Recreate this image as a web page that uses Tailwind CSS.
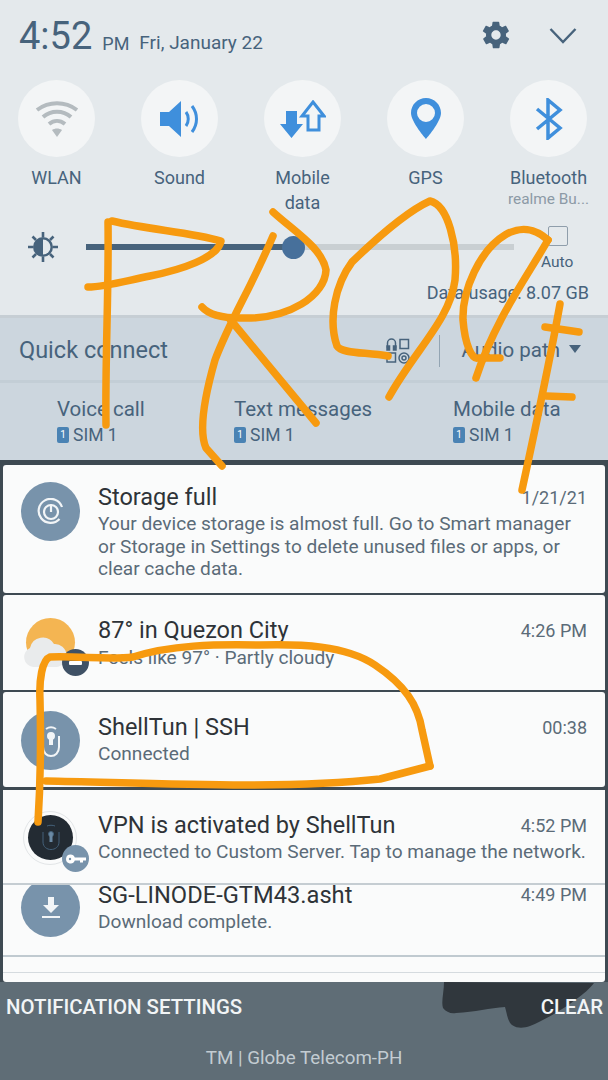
<!DOCTYPE html>
<html lang="en">
<head>
<meta charset="UTF-8">
<meta name="viewport" content="width=device-width, initial-scale=1.0">
<title>Notification panel</title>
<script src="https://cdn.jsdelivr.net/npm/@tailwindcss/browser@4"></script>
</head>
<body class="bg-[#5f6d76]">
<div class="relative w-[608px] h-[1080px] overflow-hidden font-['Roboto',sans-serif] bg-[#5f6d76]">

  <!-- top panel -->
  <div class="h-[315px] bg-[#e4e9ec] text-[#47637c] relative">
    <div class="flex items-center h-[80px] pl-[19px] pr-[31px]">
      <span class="text-[38px] leading-none mt-[-8px]">4:52</span>
      <span class="text-[18px] ml-[10px] mt-[7px]">PM</span>
      <span class="text-[19px] ml-[10px] mt-[7px]">Fri, January 22</span>
      <svg class="ml-auto mt-[-10px]" width="32" height="32" viewBox="0 0 24 24" fill="#47637c"><path d="M19.400 13c.1-.3.1-.7.1-1s0-.7-.1-1l2.100-1.600c.2-.2.2-.4.1-.6l-2-3.500c-.1-.2-.4-.3-.6-.2l-2.500 1c-.5-.4-1.100-.7-1.700-1l-.4-2.600c0-.3-.2-.5-.5-.5h-4c-.3 0-.5.2-.5.4l-.4 2.700c-.6.2-1.100.6-1.700 1l-2.500-1c-.2-.1-.5 0-.6.2l-2 3.500c-.1.2-.1.4.1.6L4.600 11c-.1.3-.1.7-.1 1s0 .7.1 1l-2.100 1.600c-.2.2-.2.4-.1.6l2 3.500c.1.2.4.3.6.2l2.500-1c.5.4 1.100.7 1.700 1l.4 2.600c0 .3.2.5.5.5h4c.3 0 .5-.2.5-.4l.4-2.700c.6-.2 1.100-.6 1.700-1l2.500 1c.2.1.5 0 .6-.2l2-3.500c.1-.2.1-.4-.1-.6L19.400 13zM12 15.500c-1.900 0-3.500-1.600-3.500-3.500s1.600-3.500 3.500-3.500 3.500 1.600 3.500 3.500-1.600 3.500-3.500 3.500z"/></svg>
      <svg class="ml-[37px] mt-[-9px]" width="28" height="18" viewBox="0 0 28 18" fill="none" stroke="#47637c" stroke-width="2.400"><path d="M1.500 2 14 15 26.500 2"/></svg>
    </div>

    <!-- toggles -->
    <div class="flex ml-[-5px]">
      <div class="w-[123px] shrink-0 flex flex-col items-center text-[18px] leading-[25px]">
        <div class="w-[77px] h-[77px] rounded-full bg-[#f3f5f6] flex items-center justify-center">
          <svg width="46" height="38" viewBox="0 0 46 38" fill="none" stroke="#b4bbbf" stroke-width="4"><path d="M3 10C15 1 31 1 43 10"/><path d="M9 17C17 10 29 10 37 17"/><path d="M15 24C20 20 26 20 31 24"/><path d="M18 30 23 37 28 30C25 28 21 28 18 30Z" fill="#b4bbbf" stroke="none"/></svg>
        </div>
        <span class="mt-[8px]">WLAN</span>
      </div>
      <div class="w-[123px] shrink-0 flex flex-col items-center text-[18px] leading-[25px]">
        <div class="w-[77px] h-[77px] rounded-full bg-[#f3f5f6] flex items-center justify-center">
          <svg width="40" height="36" viewBox="0 0 40 36" fill="#3f8fdc"><path d="M0 11H9L21 0V36L9 25H0Z"/><path d="M26 11C29 15 29 21 26 25" fill="none" stroke="#3f8fdc" stroke-width="3"/><path d="M32 5C38 13 38 23 32 31" fill="none" stroke="#3f8fdc" stroke-width="3"/></svg>
        </div>
        <span class="mt-[8px]">Sound</span>
      </div>
      <div class="w-[123px] shrink-0 flex flex-col items-center text-[18px] leading-[25px]">
        <div class="w-[77px] h-[77px] rounded-full bg-[#f3f5f6] flex items-center justify-center">
          <svg width="46" height="38" viewBox="0 0 46 38" fill="#3f8fdc"><path d="M6 11H17V24H23L11.500 38 0 24H6Z"/><path d="M33 2 44 16H39V30H28V16H22Z" fill="#f3f5f6" stroke="#3f8fdc" stroke-width="3"/></svg>
        </div>
        <span class="mt-[8px] text-center">Mobile<br>data</span>
      </div>
      <div class="w-[123px] shrink-0 flex flex-col items-center text-[18px] leading-[25px]">
        <div class="w-[77px] h-[77px] rounded-full bg-[#f3f5f6] flex items-center justify-center">
          <svg width="30" height="41" viewBox="0 0 30 41" fill="#3f8fdc"><path fill-rule="evenodd" d="M15 0C6.700 0 0 6.700 0 15 0 24 15 41 15 41S30 24 30 15C30 6.700 23.300 0 15 0ZM15 6A9 9 0 1 1 15 24 9 9 0 1 1 15 6Z"/></svg>
        </div>
        <span class="mt-[8px]">GPS</span>
      </div>
      <div class="w-[123px] shrink-0 flex flex-col items-center text-[18px] leading-[25px]">
        <div class="w-[77px] h-[77px] rounded-full bg-[#f3f5f6] flex items-center justify-center">
          <svg width="28" height="42" viewBox="0 0 28 42" fill="none" stroke="#3f8fdc" stroke-width="3.500"><path d="M2 11 25 30 13 40V2L25 12 2 31"/></svg>
        </div>
        <span class="mt-[8px]">Bluetooth</span>
        <span class="text-[15.400px] leading-[20px] text-[#8c9aa6] mt-[-1px] whitespace-nowrap">realme Bu...</span>
      </div>
    </div>

    <!-- brightness -->
    <div class="absolute left-[27px] top-[231px]">
      <svg width="32" height="32" viewBox="0 0 32 32" fill="#47637c"><circle cx="16" cy="16" r="10" fill="#47637c"/><path d="M16 8.500A7.500 7.500 0 0 1 16 23.500Z" fill="#e4e9ec"/><g stroke="#47637c" stroke-width="2.600"><path d="M16 1V6M16 26V31M1 16H6M26 16H31M5.500 5.500 9 9M23 23 26.500 26.500M5.500 26.500 9 23M23 9 26.500 5.500"/></g></svg>
    </div>
    <div class="absolute left-[86px] top-[244px] w-[428px] h-[6px] bg-[#c9cfd2]">
      <div class="w-[206px] h-full bg-[#47637c]"></div>
      <div class="absolute left-[196px] top-[-8px] w-[23px] h-[23px] rounded-full bg-[#47709b]"></div>
    </div>
    <div class="absolute left-[548px] top-[226px] w-[20px] h-[20px] border border-[#8f9eab] rounded-[2px]"></div>
    <span class="absolute left-[541px] top-[252px] text-[15.500px] leading-[20px]">Auto</span>
    <span class="absolute right-[19px] top-[281px] text-[18px] leading-[24px]">Data usage: 8.07 GB</span>
  </div>

  <!-- quick connect -->
  <div class="h-[145px] bg-[#ccd6de] border-t-[3px] border-[#c6ced4] text-[#47637c] relative">
    <div class="h-[65px] flex items-center pt-[4px] pl-[19px] pr-[27px] border-b-[3px] border-[#c3ced6]">
      <span class="text-[23.500px]">Quick connect</span>
      <svg class="ml-auto" width="24" height="26" viewBox="0 0 24 26" fill="none" stroke="#47637c" stroke-width="1.500"><path d="M1.500 10V5a4 4 0 0 1 8 0v5"/><rect x="1" y="8" width="2.500" height="4" fill="#47637c"/><rect x="7.500" y="8" width="2.500" height="4" fill="#47637c"/><rect x="14" y="1.500" width="8.500" height="9"/><rect x="1" y="15" width="8.500" height="9"/><circle cx="18" cy="20" r="5"/><circle cx="18" cy="20" r="2"/></svg>
      <div class="w-[1px] h-[32px] bg-[#93a5b3] ml-[29px]"></div>
      <span class="text-[20.500px] ml-[21px] mt-[-2px]">Audio path</span>
      <svg class="ml-[9px] mb-[4px]" width="12" height="8" viewBox="0 0 12 8" fill="#47637c"><path d="M0 0H12L6 8Z"/></svg>
    </div>
    <div class="relative">
      <div class="absolute left-[57px] top-[10px]">
        <div class="text-[20.500px] leading-[32px]">Voice call</div>
        <div class="flex items-center text-[17.500px] leading-[22px] mt-[-1px]"><span class="w-[12px] h-[16px] bg-[#4a83b4] rounded-[2px] text-white text-[10px] leading-[16px] text-center mr-[4px]">1</span>SIM 1</div>
      </div>
      <div class="absolute left-[234px] top-[10px]">
        <div class="text-[20.500px] leading-[32px]">Text messages</div>
        <div class="flex items-center text-[17.500px] leading-[22px] mt-[-1px]"><span class="w-[12px] h-[16px] bg-[#4a83b4] rounded-[2px] text-white text-[10px] leading-[16px] text-center mr-[4px]">1</span>SIM 1</div>
      </div>
      <div class="absolute left-[453px] top-[10px]">
        <div class="text-[20.500px] leading-[32px]">Mobile data</div>
        <div class="flex items-center text-[17.500px] leading-[22px] mt-[-1px]"><span class="w-[12px] h-[16px] bg-[#4a83b4] rounded-[2px] text-white text-[10px] leading-[16px] text-center mr-[4px]">1</span>SIM 1</div>
      </div>
    </div>
  </div>

  <!-- notifications -->
  <div class="h-[522px] bg-[#3e4a52] pt-[5px] px-[3px] relative">
    <div class="h-[128px] bg-[#fafbfb] rounded-[3px] relative">
      <div class="absolute left-[18px] top-[17px] w-[59px] h-[59px] rounded-full bg-[#7893ab] flex items-center justify-center">
        <svg width="28" height="28" viewBox="0 0 28 28" fill="none" stroke="#f2f5f7" stroke-width="2.200"><path d="M22.500 21A12 12 0 1 1 25 9"/><circle cx="14" cy="14" r="7"/><path d="M14 6.500V14"/></svg>
      </div>
      <div class="absolute left-[95px] right-[18px] top-[18px]">
        <div class="flex justify-between items-center">
          <span class="text-[23.500px] leading-[28px] text-[#2e3338]">Storage full</span>
          <span class="text-[18px] text-[#5b6b78]">1/21/21</span>
        </div>
        <p class="text-[19.100px] leading-[22.500px] text-[#5b6b78] mt-[2px]">Your device storage is almost full. Go to Smart manager or Storage in Settings to delete unused files or apps, or clear cache data.</p>
      </div>
    </div>
    <div class="h-[95px] mt-[2px] bg-[#fafbfb] rounded-t-[3px] relative">
      <div class="absolute left-[23px] top-[23px] w-[49px] h-[49px] rounded-full bg-[#f4b552]"></div>
      <svg class="absolute left-[20px] top-[38px]" width="44" height="34" viewBox="0 0 44 34" fill="#e9ebec"><path d="M10 34A10 10 0 0 1 7 15 13 13 0 0 1 31 11 11.500 11.500 0 0 1 33 34Z"/></svg>
      <div class="absolute left-[59px] top-[54px] w-[27px] h-[27px] rounded-full bg-[#3f5165] flex items-center justify-center"><div class="w-[13px] h-[4px] bg-white rounded-[1px]"></div></div>
      <div class="absolute left-[95px] right-[18px] top-[21px]">
        <div class="flex justify-between items-center">
          <span class="text-[23.500px] leading-[28px] text-[#2e3338]">87° in Quezon City</span>
          <span class="text-[18px] text-[#5b6b78]">4:26 PM</span>
        </div>
        <p class="text-[19.100px] leading-[24px] text-[#5b6b78] mt-[2px]">Feels like 97° · Partly cloudy</p>
      </div>
    </div>
    <div class="h-[95px] mt-[2px] bg-[#fafbfb] rounded-[3px] relative">
      <div class="absolute left-[18px] top-[19px] w-[59px] h-[59px] rounded-full bg-[#7893ab] flex items-center justify-center">
        <svg width="28" height="34" viewBox="0 0 28 34" fill="none" stroke="#f2f5f7" stroke-width="2"><path d="M9 5C12 3 16 3 19 5"/><path d="M6 12V23C6 35 22 35 22 23V12"/><circle cx="14" cy="12" r="3" fill="#f2f5f7"/><path d="M14 13V21" stroke-width="4"/></svg>
      </div>
      <div class="absolute left-[95px] right-[18px] top-[21px]">
        <div class="flex justify-between items-center">
          <span class="text-[23.500px] leading-[28px] text-[#2e3338]">ShellTun | SSH</span>
          <span class="text-[18px] text-[#5b6b78]">00:38</span>
        </div>
        <p class="text-[19.100px] leading-[24px] text-[#5b6b78] mt-[1px]">Connected</p>
      </div>
    </div>
    <div class="h-[95px] mt-[3px] bg-[#fafbfb] border-b-2 border-[#c5cdd2] relative z-10">
      <div class="absolute left-[20px] top-[21px] w-[54px] h-[54px] rounded-full border border-[#e2e5e7]"></div>
      <div class="absolute left-[25px] top-[25px] w-[45px] h-[45px] rounded-full bg-[#232b33] flex items-center justify-center">
        <svg width="20" height="28" viewBox="0 0 20 28" fill="none" stroke="#44617a" stroke-width="1"><path d="M6 2C8 1 12 1 14 2"/><path d="M2 8V18C2 28 18 28 18 18V8"/><circle cx="10" cy="10" r="2.500" fill="#6b8aa5"/><path d="M10 11V18" stroke="#6b8aa5" stroke-width="3"/></svg>
      </div>
      <div class="absolute left-[59px] top-[55px] w-[27px] h-[27px] rounded-full bg-[#7893ab] flex items-center justify-center">
        <svg width="20" height="10" viewBox="0 0 20 10" fill="#fff"><path fill-rule="evenodd" d="M4.500 0.500A4.500 4.500 0 0 1 8.800 3.500H20V6.500H17V8.500H14V6.500H8.800A4.500 4.500 0 1 1 4.500 0.500ZM4 3.800A1.200 1.200 0 1 0 4 6.200 1.200 1.200 0 1 0 4 3.800Z"/></svg>
      </div>
      <div class="absolute left-[95px] right-[18px] top-[21px]">
        <div class="flex justify-between items-center">
          <span class="text-[23.500px] leading-[28px] text-[#2e3338]">VPN is activated by ShellTun</span>
          <span class="text-[18px] text-[#5b6b78]">4:52 PM</span>
        </div>
        <p class="text-[19.100px] leading-[24px] text-[#5b6b78] whitespace-nowrap mt-[1px]">Connected to Custom Server. Tap to manage the network.</p>
      </div>
    </div>
    <div class="h-[70px] bg-[#fafbfb] relative">
      <div class="absolute left-[18px] top-[-7px] w-[59px] h-[59px] rounded-full bg-[#7893ab] flex items-center justify-center">
        <svg width="20" height="22" viewBox="0 0 20 22" fill="#f2f5f7"><path d="M7 0H13V8H18L10 16 2 8H7Z"/><rect x="1" y="19" width="18" height="2"/></svg>
      </div>
      <div class="absolute left-[95px] right-[18px] top-[-1px]">
        <div class="flex justify-between items-center h-[22px]">
          <span class="text-[23.700px] leading-[22px] text-[#2e3338]">SG-LINODE-GTM43.asht</span>
          <span class="text-[18px] leading-[22px] text-[#5b6b78]">4:49 PM</span>
        </div>
        <p class="text-[19.100px] leading-[24px] text-[#5b6b78] mt-[4px]">Download complete.</p>
      </div>
    </div>
    <div class="h-[17px] bg-[#fafbfb] border-t-2 border-[#c0cad0]"></div>
    <div class="h-[10px] bg-[#fafbfb] border-t border-[#d5dbdf] rounded-b-[3px]"></div>
  </div>

  <!-- bottom bar -->
  <div class="absolute left-0 right-0 top-[982px] h-[98px] bg-[#5f6d76]">
    <svg class="absolute left-[440px] top-0" width="156" height="48" viewBox="0 0 156 48" fill="#30373d"><path d="M4 0C4 10 1 20 3 26 6 30 11 32 16 31 35 30 50 26 65 25 67 32 68 40 72 43 78 47 84 46 90 44 105 38 125 26 135 18 144 12 150 6 154 1Z"/></svg>
    <span class="absolute left-[6px] top-[12px] text-[20.400px] leading-[26px] font-medium text-[#f2f5f6]">NOTIFICATION SETTINGS</span>
    <span class="absolute right-[5px] top-[12px] text-[20.400px] leading-[26px] font-medium text-[#f2f5f6]">CLEAR</span>
    <span class="absolute left-0 right-0 top-[64px] text-center text-[18.800px] leading-[24px] text-[#c3ccd2]">TM | Globe Telecom-PH</span>
  </div>

  <!-- hand drawn scribble on top of the screenshot -->
  <svg class="absolute inset-0 z-20 pointer-events-none" width="608" height="1080" viewBox="0 0 608 1080" fill="none" stroke="#f79a0f" stroke-width="7.500" stroke-linecap="round" stroke-linejoin="round">
    <path d="M108 222C109 290 105 360 106 425"/>
    <path d="M112 221C150 230 190 232 221 241 218 258 180 270 150 276 125 281 105 287 88 287"/>
    <path d="M273 212C295 232 322 248 326 270 325 295 290 320 240 318 225 318 210 316 202 307"/>
    <path d="M273 236C250 290 230 320 215 360 205 395 198 430 206 448L222 466"/>
    <path d="M229 318 316 423"/>
    <path d="M388 356C365 352 342 354 337 346 328 320 335 285 352 262 380 235 410 210 430 201 448 205 458 245 455 280 450 320 415 350 389 397"/>
    <path d="M548 240C535 228 520 226 505 235 480 250 462 290 463 320 465 345 472 360 478 358L500 358"/>
    <path d="M548 240C525 280 495 320 476 378"/>
    <path d="M560 304C550 360 535 430 522 490"/>
    <path d="M545 327 579 332"/>
    <path d="M546 396 572 397"/>
    <path d="M38 822C40 790 41 740 40 700 39 680 42 660 50 657 80 656 110 660 133 657 170 645 215 644 260 645 300 644 345 645 375 665 405 685 418 705 422 730L430 766"/>
    <path d="M46 781C150 783 280 790 380 779L430 766"/>
  </svg>
</div>
</body>
</html>
